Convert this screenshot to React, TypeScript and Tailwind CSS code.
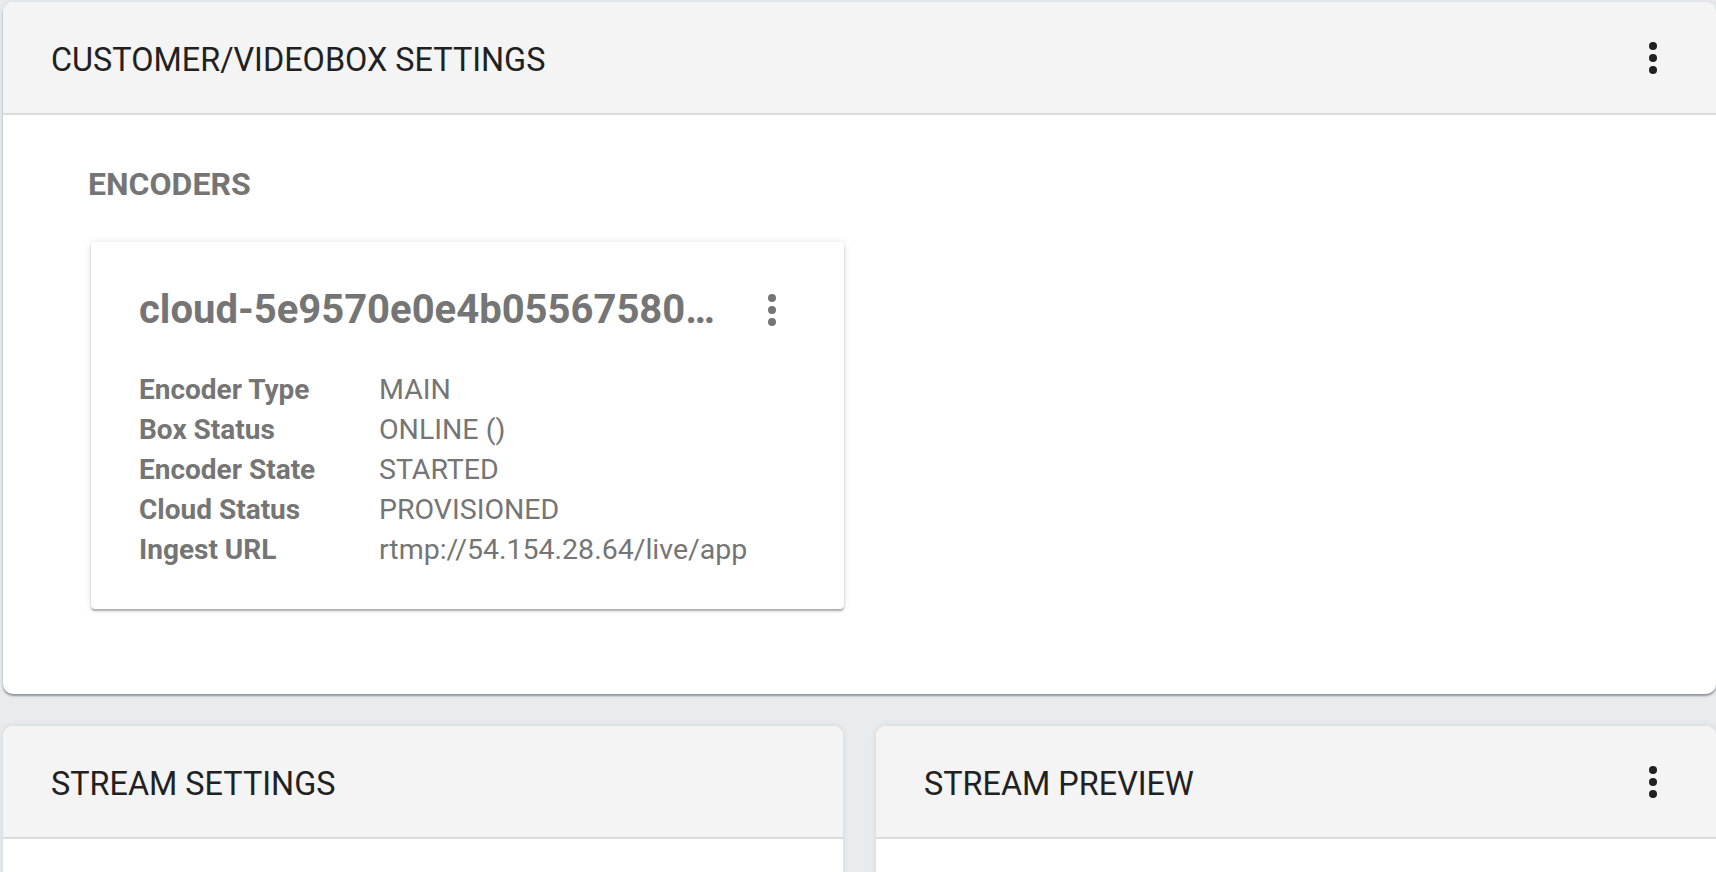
import React from 'react';

const Kebab: React.FC<{ className?: string }> = ({ className }) => (
  <svg viewBox="0 0 24 24" className={className} fill="currentColor">
    <circle cx="12" cy="6" r="2" />
    <circle cx="12" cy="12" r="2" />
    <circle cx="12" cy="18" r="2" />
  </svg>
);

const PanelHeader: React.FC<{ title: string; menu?: boolean }> = ({ title, menu }) => (
  <div className="h-[113px] bg-[#f4f4f4] border-b-2 border-[#dcdcdc] flex items-center justify-between pl-12 pr-[39px]">
    <h2 className="pt-[5px] text-[32.4px] leading-[48px] text-[#212121] font-normal">{title}</h2>
    {menu && <Kebab className="w-12 h-12 text-[#212121]" />}
  </div>
);

const encoderRows: [string, string][] = [
  ['Encoder Type', 'MAIN'],
  ['Box Status', 'ONLINE ()'],
  ['Encoder State', 'STARTED'],
  ['Cloud Status', 'PROVISIONED'],
  ['Ingest URL', 'rtmp://54.154.28.64/live/app'],
];

const App: React.FC = () => {
  return (
    <div className="min-h-screen bg-[#e8ecef] pt-[2px] pl-[3px] font-['Roboto',sans-serif] overflow-hidden">
      {/* Customer / videobox settings */}
      <section className="bg-white rounded-[10px] overflow-hidden shadow-[0_2px_2px_rgba(0,0,0,0.35),0_0_6px_rgba(0,0,0,0.08)]">
        <PanelHeader title="CUSTOMER/VIDEOBOX SETTINGS" menu />
        <div className="pt-[45px] pb-[85px] pl-[85px]">
          <h3 className="text-[32px] leading-[48px] font-bold text-[#757575]">ENCODERS</h3>
          <div className="mt-[34px] ml-[3px] w-[753px] h-[367px] bg-white rounded-[4px] px-12 pt-[44px] shadow-[0_2px_2px_rgba(0,0,0,0.3),0_0_8px_rgba(0,0,0,0.1)]">
            <div className="flex items-center gap-6">
              <div className="flex-1 min-w-0 truncate text-[40px] leading-[48px] font-bold text-[#757575]">
                cloud-5e9570e0e4b0556758012ab3
              </div>
              <Kebab className="w-12 h-12 text-[#757575] shrink-0" />
            </div>
            <div className="mt-[36px] grid grid-cols-[240px_1fr] leading-[40px] text-[#757575]">
              {encoderRows.map(([label, value]) => (
                <React.Fragment key={label}>
                  <div className="font-bold text-[28px]">{label}</div>
                  <div className="text-[28.5px]">{value}</div>
                </React.Fragment>
              ))}
            </div>
          </div>
        </div>
      </section>

      {/* Stream panels */}
      <div className="mt-[32px] grid grid-cols-2 gap-[33px]">
        <section className="bg-white rounded-t-[10px] overflow-hidden shadow-[0_0_6px_rgba(0,0,0,0.1)]">
          <PanelHeader title="STREAM SETTINGS" />
          <div className="h-[200px]" />
        </section>
        <section className="bg-white rounded-t-[10px] overflow-hidden shadow-[0_0_6px_rgba(0,0,0,0.1)]">
          <PanelHeader title="STREAM PREVIEW" menu />
          <div className="h-[200px]" />
        </section>
      </div>
    </div>
  );
};

export default App;
